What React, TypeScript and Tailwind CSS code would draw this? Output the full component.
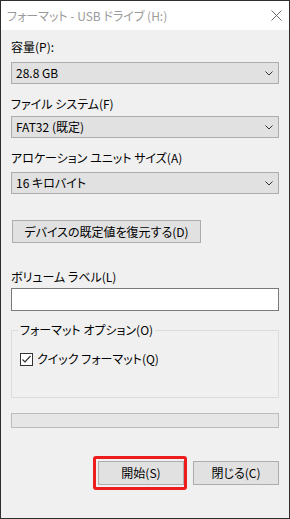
export default function App() {
  const Chevron = () => (
    <svg width="8" height="5" viewBox="0 0 8 5" className="block">
      <path d="M0.5 0.5 L4 4 L7.5 0.5" fill="none" stroke="#333" strokeWidth="1" />
    </svg>
  );
  const Select = ({ text }: { text: string }) => (
    <div className="h-[22px] border border-[#adadad] bg-[#e1e1e1] flex items-center justify-between pl-[4px] pr-[5px]">
      <span>{text}</span>
      <Chevron />
    </div>
  );
  return (
    <div className="w-[290px] h-[519px] border border-[#2e2e2e] bg-[#f0f0f0] flex flex-col text-[12px] leading-[16px] text-black font-['Noto_Sans_CJK_JP','Noto_Sans',sans-serif] [font-feature-settings:'palt']">
      <div className="h-[29px] shrink-0 bg-white flex items-center justify-between pl-[6px] pr-[7px]">
        <span className="text-[#9a9a9a]">フォーマット - USB ドライブ (H:)</span>
        <svg width="11" height="11" viewBox="0 0 11 11" className="block">
          <path d="M0.5 0.5 L10.5 10.5 M10.5 0.5 L0.5 10.5" stroke="#6d6d6d" strokeWidth="1" fill="none" />
        </svg>
      </div>
      <div className="flex flex-col px-[10px] pt-[9px]">
        <div>容量(P):</div>
        <div className="mt-[7px]">
          <Select text="28.8 GB" />
        </div>
        <div className="mt-[12px]">ファイル システム(F)</div>
        <div className="mt-[4px]">
          <Select text="FAT32 (既定)" />
        </div>
        <div className="mt-[12px]">アロケーション ユニット サイズ(A)</div>
        <div className="mt-[6px]">
          <Select text="16 キロバイト" />
        </div>
        <div className="mt-[26px] ml-[1px] w-[189px] h-[23px] border border-[#adadad] bg-[#e1e1e1] flex items-center justify-center">
          デバイスの既定値を復元する(D)
        </div>
        <div className="mt-[26px]">ボリューム ラベル(L)</div>
        <div className="mt-[3px] h-[23px] border border-[#7a7a7a] bg-white" />
        <div className="relative mt-[19px] h-[68px] border border-[#dcdcdc] pl-[8px] pt-[20px]">
          <span className="absolute left-[6px] top-[-9px] bg-[#f0f0f0] px-[2px]">フォーマット オプション(O)</span>
          <div className="flex items-center gap-[4px]">
            <div className="w-[13px] h-[13px] border border-[#333] bg-white flex items-center justify-center">
              <svg width="11" height="11" viewBox="0 0 11 11" className="block">
                <path d="M1.5 5.5 L4 8 L9.5 2" fill="none" stroke="#333" strokeWidth="1.2" />
              </svg>
            </div>
            <span>クイック フォーマット(Q)</span>
          </div>
        </div>
        <div className="mt-[15px] h-[15px] border border-[#bcbcbc] bg-[#e6e6e6]" />
        <div className="mt-[33px] flex justify-end gap-[9px]">
          <div className="relative w-[86px] h-[24px] border border-[#adadad] bg-[#e1e1e1] flex items-center justify-center">
            開始(S)
            <div className="pointer-events-none absolute left-[-6px] top-[-6px] right-[-4px] bottom-[-6px] border-[3px] border-[#ee1c1c] rounded-[3px]" />
          </div>
          <div className="w-[86px] h-[24px] border border-[#adadad] bg-[#e1e1e1] flex items-center justify-center">
            閉じる(C)
          </div>
        </div>
      </div>
    </div>
  );
}
